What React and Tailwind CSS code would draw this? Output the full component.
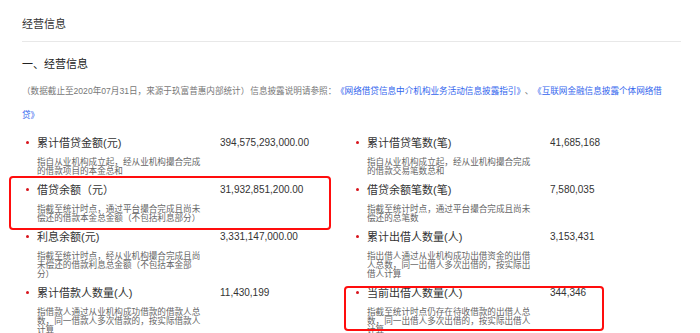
import React from "react";

const items = [
  [
    {
      label: "累计借贷金额(元)",
      value: "394,575,293,000.00",
      desc: "指自从业机构成立起，经从业机构撮合完成的借款项目的本金总和",
    },
    {
      label: "累计借贷笔数(笔)",
      value: "41,685,168",
      desc: "指自从业机构成立起，经从业机构撮合完成的借款交易笔数总和",
    },
  ],
  [
    {
      label: "借贷余额（元）",
      value: "31,932,851,200.00",
      desc: "指截至统计时点，通过平台撮合完成且尚未偿还的借款本金总金额（不包括利息部分）",
      mark: "left",
    },
    {
      label: "借贷余额笔数(笔)",
      value: "7,580,035",
      desc: "指截至统计时点，通过平台撮合完成且尚未偿还的总笔数",
    },
  ],
  [
    {
      label: "利息余额(元)",
      value: "3,331,147,000.00",
      desc: "指截至统计时点，经从业机构撮合完成且尚未偿还的借款利息总金额（不包括本金部分）",
    },
    {
      label: "累计出借人数量(人)",
      value: "3,153,431",
      desc: "指出借人通过从业机构成功出借资金的出借人总数，同一出借人多次出借的，按实际出借人计算",
    },
  ],
  [
    {
      label: "累计借款人数量(人)",
      value: "11,430,199",
      desc: "指借款人通过从业机构成功借款的借款人总数，同一借款人多次借款的，按实际借款人计算",
    },
    {
      label: "当前出借人数量(人)",
      value: "344,346",
      desc: "指截至统计时点仍存在待收借款的出借人总数，同一出借人多次出借的，按实际出借人计算",
      mark: "right",
    },
  ],
];

function Item({ item }) {
  return (
    <div className="relative flex pb-[8px]">
      <div className="w-[15px] shrink-0 pl-[4px] pt-[5px]">
        <div className="w-[3px] h-[3px] rounded-full bg-[#d8141c]" />
      </div>
      <div className="w-[183px] shrink-0">
        <div className="h-[14px] leading-[14px] text-[11px] text-[#333]">
          {item.label}
        </div>
        <p className="mt-[7px] w-[167px] text-[8.6px] leading-[9px] text-[#666] font-['Noto_Sans_CJK_SC',sans-serif]">
          {item.desc}
        </p>
      </div>
      <div className="h-[14px] leading-[14px] text-[10px] text-[#333]">
        {item.value}
      </div>

      {/* annotation boxes */}
      {item.mark === "left" && (
        <div className="absolute -top-[7px] -left-[13px] w-[322px] h-[54px] border-2 border-[#ff0d0d] rounded-[4px] pointer-events-none" />
      )}
      {item.mark === "right" && (
        <div className="absolute top-0 -left-[8px] w-[260px] h-[45px] border-2 border-[#ff0d0d] rounded-[4px] pointer-events-none" />
      )}
    </div>
  );
}

export default function App() {
  return (
    <div
      className="w-[700px] h-[333px] overflow-hidden bg-white px-[22px]"
      style={{ fontFamily: '"Liberation Sans", "Noto Sans CJK SC", sans-serif' }}
    >
      {/* Header */}
      <div className="pt-[16px] pb-[9px] border-b border-[#e8e8e8] w-[659px]">
        <h2 className="text-[11px] leading-[16px] text-[#333]">经营信息</h2>
      </div>

      {/* Section title */}
      <h3 className="mt-[14px] text-[11px] leading-[16px] text-[#222]">
        一、经营信息
      </h3>

      {/* Note */}
      <p className="mt-[7px] w-[656px] text-[8.6px] leading-[24px] text-[#777] whitespace-nowrap">
        <span>（数据截止至2020年07月31日，来源于玖富普惠内部统计）</span>
        <span className="ml-[1px]">信息披露说明请参照：</span>
        <span className="ml-[4px] text-[#3366ee]">《网络借贷信息中介机构业务活动信息披露指引》</span>
        <span className="mx-[4px]">、</span>
        <span className="text-[#3366ee]">
          《互联网金融信息披露个体网络借
          <br />
          贷》
        </span>
      </p>

      {/* Data grid */}
      <div className="mt-[9px] grid grid-cols-[330px_330px]">
        {items.map((row, i) => (
          <React.Fragment key={i}>
            <Item item={row[0]} />
            <Item item={row[1]} />
          </React.Fragment>
        ))}
      </div>
    </div>
  );
}
